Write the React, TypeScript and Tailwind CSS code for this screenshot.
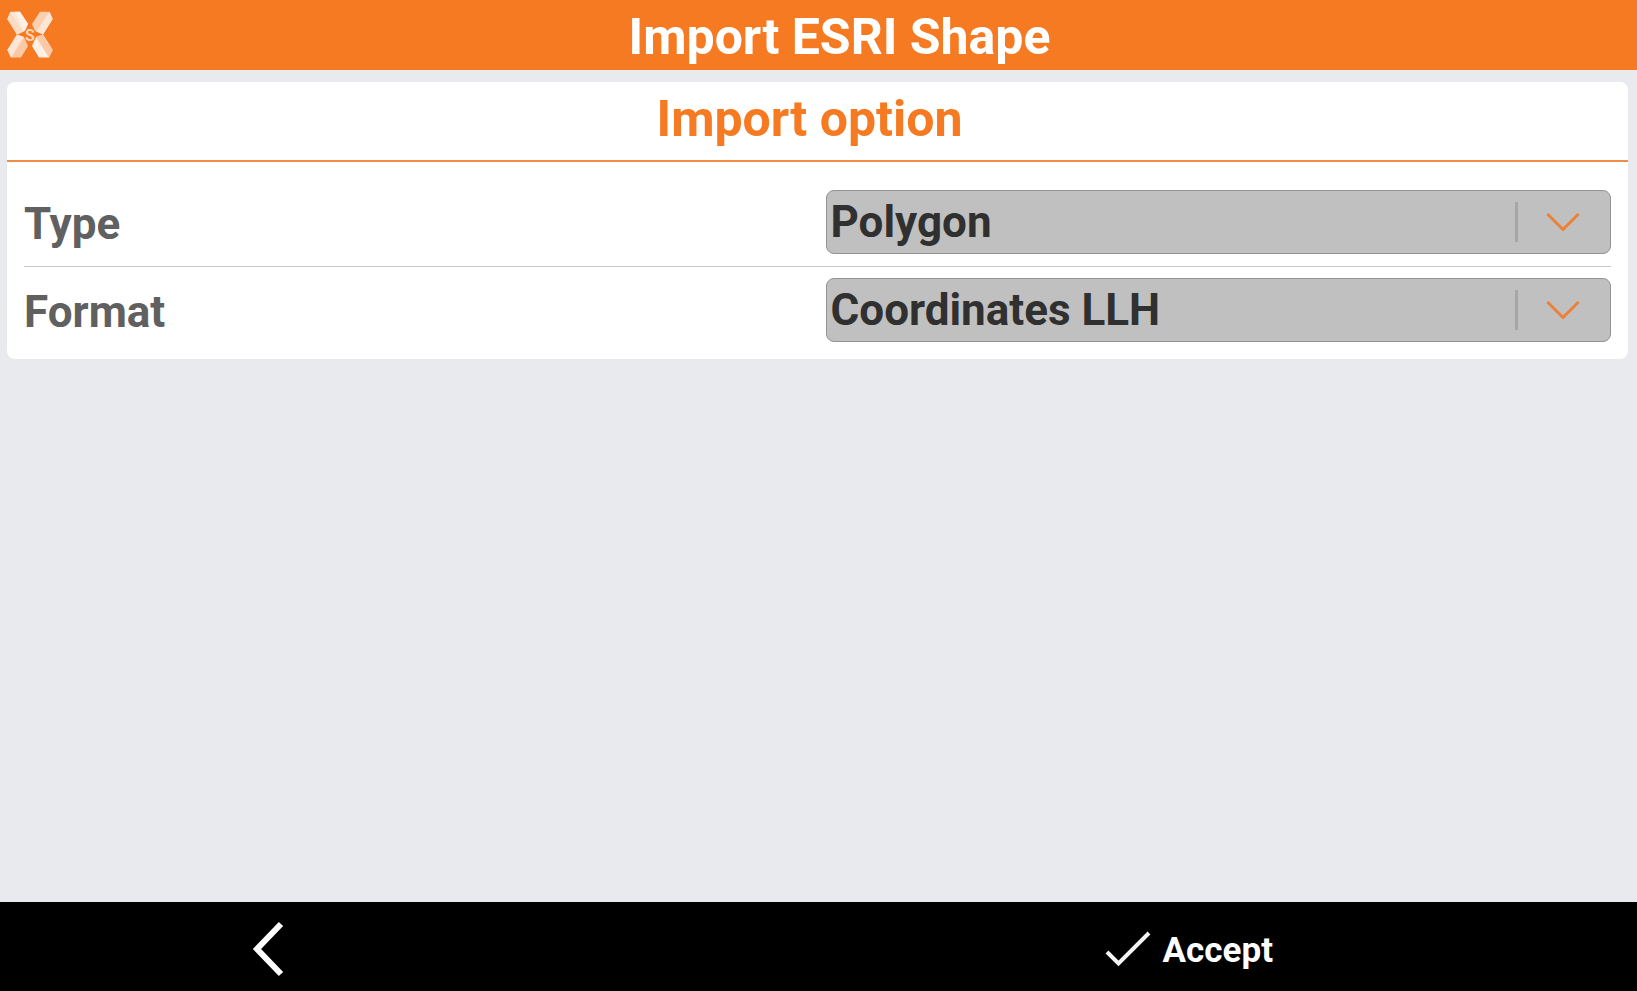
import { useId, useState } from 'react';

function Logo() {
  return (
    <svg viewBox="0 0 48 48" className="h-12 w-12 shrink-0" aria-hidden="true">
      <path d="M4.500 0.700H14L22 13L19 20L11 23.500L1.300 8Z" fill="#fde6d6" />
      <path d="M4.500 0.700L1.300 8L11 23.500L17 20.500Z" fill="#fcdcc5" />
      <path d="M14 0.700L22 13L18 20L9 0.700Z" fill="#fef0e6" />
      <path d="M34 0.700H43.500L46.700 8L37 23.500L29 20L26 13Z" fill="#fbd0b0" />
      <path d="M43.500 0.700L46.700 8L37 23.500L30.500 20.500Z" fill="#fde6d6" />
      <path d="M11 23.500L18 26L22 35L15 46.500H5L1.300 39Z" fill="#fbc9a5" />
      <path d="M11 23.500L18 26L5 46.500L1.300 39Z" fill="#fde6d6" />
      <path d="M37 23.500L46.700 39L43 46.500H33L26 35L30 26Z" fill="#fef0e6" />
      <path d="M37 23.500L46.700 39L43 46.500L30 26Z" fill="#fbc9a5" />
      <circle cx="24" cy="23.500" r="6.500" fill="#f57a22" />
      <text x="24" y="29.500" textAnchor="middle" fontFamily="Roboto, sans-serif" fontWeight="700" fontSize="16" fill="#fcd5b8">
        S
      </text>
    </svg>
  );
}

function SelectRow({ label, options }: { label: string; options: string[] }) {
  const id = useId();
  const [value, setValue] = useState(options[0]);
  return (
    <div className="grid grid-cols-2 items-center gap-4">
      <label htmlFor={id} className="pt-1 text-[44px] leading-none text-[#606060]">
        {label}
      </label>
      <div className="relative">
        <select
          id={id}
          value={value}
          onChange={(e) => setValue(e.target.value)}
          className="block h-16 w-full appearance-none rounded-lg border border-[#939393] bg-[#c0c0c0] pr-24 pl-1 text-[44px] leading-[60px] text-[#303030]"
        >
          {options.map((o) => (
            <option key={o}>{o}</option>
          ))}
        </select>
        <div className="pointer-events-none absolute inset-y-0 right-0 flex w-24 items-center justify-center">
          <span className="absolute left-0 h-10 w-[3px] bg-[#a6a6a6]" />
          <svg viewBox="0 0 34 20" className="h-5 w-[34px]" fill="none" stroke="#ec8034" strokeWidth="3" aria-hidden="true">
            <path d="M1.500 2L17 17.500L32.500 2" />
          </svg>
        </div>
      </div>
    </div>
  );
}

export default function App() {
  return (
    <div className="flex min-h-screen flex-col bg-[#e9eaee] font-['Roboto',sans-serif] font-bold">
      <header className="flex h-[70px] items-center bg-[#f57a22] pl-[6px]">
        <Logo />
        <h1 className="flex-1 pt-1 pr-3 text-center text-[50px] leading-none text-white">Import ESRI Shape</h1>
      </header>

      <main className="flex-1 pt-3 pr-[9px] pl-[7px]">
        <section className="rounded-lg bg-white pb-[17px]">
          <h2 className="flex h-20 items-center justify-center border-b-2 border-[#ee8c48] pr-4 pb-[5px] text-[50px] leading-none text-[#f57a22]">
            Import option
          </h2>
          <div className="px-[17px] pt-7">
            <SelectRow label="Type" options={['Polygon', 'Polyline', 'Point']} />
            <hr className="mt-3 mb-[11px] border-[#c8c8c8]" />
            <SelectRow label="Format" options={['Coordinates LLH', 'Coordinates NEH']} />
          </div>
        </section>
      </main>

      <footer className="grid h-[89px] grid-cols-[33%_12%_55%] items-center bg-black text-white">
        <button type="button" aria-label="Back" className="flex h-full items-center justify-center pt-1 pr-1">
          <svg viewBox="0 0 32 56" className="h-14 w-8" fill="none" stroke="#ffffff" strokeWidth="6" aria-hidden="true">
            <path d="M29 3L5 28L29 53" />
          </svg>
        </button>
        <button type="button" className="col-start-3 flex h-full items-center justify-center gap-3 pt-1 pl-1 text-[35px]">
          <svg viewBox="0 0 46 36" className="h-9 w-[46px]" fill="none" stroke="#f4f4f4" strokeWidth="4" aria-hidden="true">
            <path d="M2 21L13.500 32.500L44 2" />
          </svg>
          <span className="pt-1 leading-none">Accept</span>
        </button>
      </footer>
    </div>
  );
}
